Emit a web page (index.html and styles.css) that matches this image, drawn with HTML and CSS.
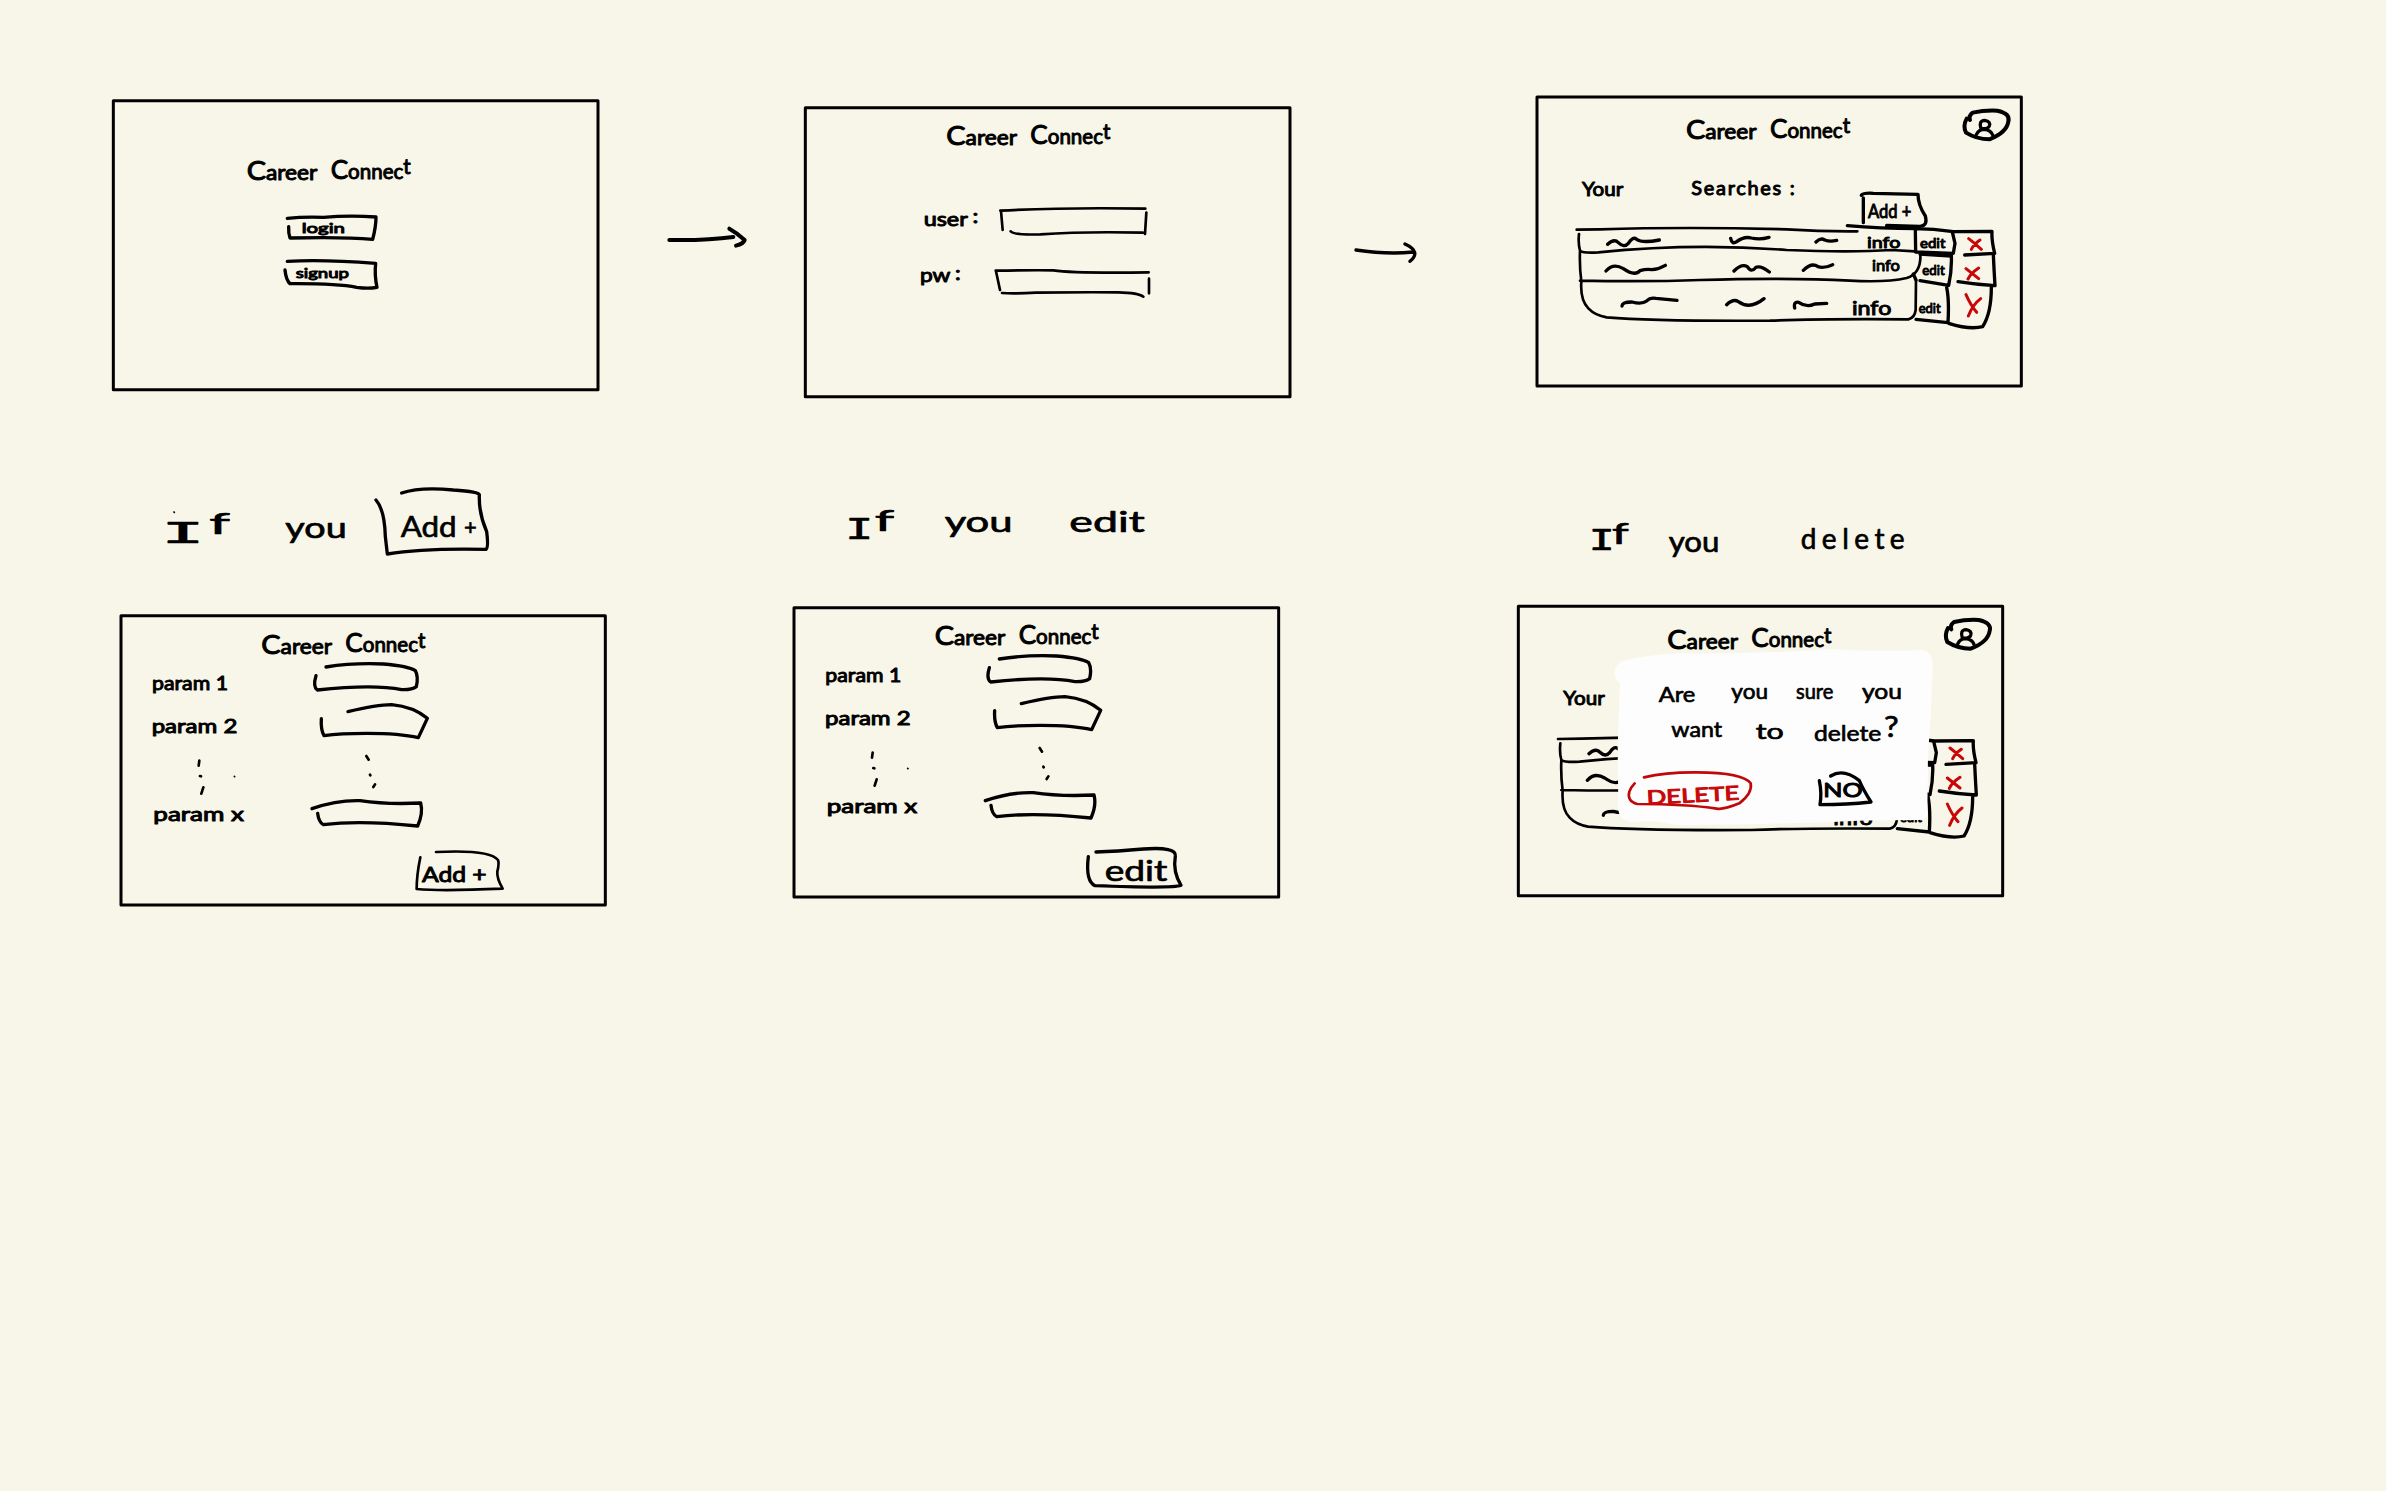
FILE: index.html
```html
<!DOCTYPE html>
<html lang="en">
<head>
<meta charset="utf-8">
<title>Career Connect wireframes</title>
<link rel="stylesheet" href="styles.css">
</head>
<body>
<svg class="defs" aria-hidden="true">
  <defs>
    <g id="avatar">
      <path class="heavy" d="M1350 120Q1345 108 1358 98Q1395 90 1432 92Q1472 100 1465 125Q1460 158 1408 178Q1370 178 1338 158Q1328 138 1340 116"/>
      <path class="bold" d="M1383 146Q1375 122 1394 121Q1413 124 1408 138Q1404 148 1383 146M1369 164Q1376 148 1394 148Q1412 150 1418 165"/>
    </g>
    <g id="table">
      <path d="M170 449L240 448Q500 440 800 448Q910 455 1012 454M177 462Q174 490 180 512Q190 520 235 517Q520 488 800 510Q990 518 1115 510L1185 514M180 512Q178 560 184 604Q180 660 205 685Q225 706 260 712Q400 724 750 722Q900 716 1165 718Q1184 714 1187 690L1188 600M180 602Q380 606 540 600Q800 592 990 602Q1100 608 1160 594Q1204 580 1201 522"/>
      <path class="bold" d="M1186 450L1187 516L1300 520L1305 490L1297 456M1183 446Q1240 446 1300 455L1416 454Q1414 480 1424 520L1334 525M1200 522L1294 528Q1296 570 1286 616L1200 602M1420 524Q1422 570 1425 617Q1370 614 1314 605M1280 622Q1288 660 1284 728L1188 718M1414 622Q1414 700 1388 740Q1350 750 1286 730M1180 582L1188 600M1188 516L1294 526"/>
      <path class="bold" d="M263 493Q282 475 295 488Q312 505 325 490Q338 468 350 478Q366 490 418 480M258 573Q280 548 310 566Q344 590 360 572Q380 566 395 569Q416 568 436 556M306 678Q306 666 336 666Q366 674 380 663Q390 652 408 655L471 661"/>
      <path class="bold" d="M632 475Q636 495 650 485Q672 468 694 474Q720 480 747 472M642 573Q665 550 682 560Q694 580 708 562Q722 556 748 576M620 674Q640 655 655 665Q690 690 732 656M888 486Q902 472 914 480Q930 486 950 481M850 571Q875 546 894 560Q912 566 938 554M824 684Q820 664 836 667Q860 684 884 672L920 670"/>
      <path class="red" d="M1346 476Q1362 488 1384 508M1380 480Q1362 492 1354 508M1338 566L1376 596M1376 564Q1352 580 1344 597M1338 644Q1352 676 1370 697M1382 656Q1358 674 1345 708"/>
    </g>
    <g id="fields">
      <path class="bold" d="M678 591Q760 578 850 582Q925 588 946 602Q956 620 949 650Q936 660 905 659Q820 642 652 660Q638 650 648 617"/>
      <path class="bold" d="M744 725Q830 704 875 704Q940 710 982 745L955 803Q900 790 800 790Q720 790 672 797Q662 780 664 746"/>
      <path class="bold" d="M636 1016Q710 990 780 992Q860 1004 962 999Q970 1030 953 1068Q780 1050 670 1064Q656 1056 653 1030"/>
      <path d="M298 872L296 887M300 918L303 919M310 952L304 971M799 858L806 869M810 914L811 916M825 943L820 951"/>
      <path class="speck" d="M403 919L404 920"/>
    </g>
  </defs>
</svg>

<main class="canvas">
  <svg class="panel home" viewBox="0 0 2040 990">
    <rect x="70" y="62" width="1454" height="867"/>
    <g transform="translate(-28 123)">
      <text class="title" x="498" y="178" textLength="212" lengthAdjust="spacingAndGlyphs"><tspan class="cap">C</tspan>areer</text>
      <text class="title" x="750" y="174" textLength="240" lengthAdjust="spacingAndGlyphs"><tspan class="cap">C</tspan>onnec<tspan dy="-14">t</tspan></text>
    </g>
    <path class="bold" d="M592 415Q640 410 700 412Q780 405 858 411Q858 440 848 478Q760 470 600 474Q595 460 596 440"/>
    <text class="tiny" x="635" y="459" textLength="130" lengthAdjust="spacingAndGlyphs">login</text>
    <path class="bold" d="M592 544Q700 538 857 550Q853 585 861 622Q835 627 800 622Q740 610 600 611Q588 600 585 570"/>
    <text class="tiny" x="617" y="594" textLength="160" lengthAdjust="spacingAndGlyphs">signup</text>
    <path class="heavy" d="M1738 480Q1850 482 1930 471M1918 446Q1940 458 1964 480Q1960 492 1938 497"/>
  </svg>

  <svg class="panel login" viewBox="0 0 2040 990">
    <rect x="76" y="53" width="1454" height="867"/>
    <g transform="translate(1 -13)">
      <text class="title" x="498" y="178" textLength="212" lengthAdjust="spacingAndGlyphs"><tspan class="cap">C</tspan>areer</text>
      <text class="title" x="750" y="174" textLength="240" lengthAdjust="spacingAndGlyphs"><tspan class="cap">C</tspan>onnec<tspan dy="-14">t</tspan></text>
    </g>
    <text class="label" x="431" y="409" textLength="164" lengthAdjust="spacingAndGlyphs">user<tspan dx="12" dy="-10">:</tspan></text>
    <path d="M661 362Q850 352 1096 356M663 363L668 420M692 424Q700 436 781 433Q911 424 1088 428M1099 368L1095 432"/>
    <text class="label" x="420" y="577" textLength="122" lengthAdjust="spacingAndGlyphs">pw<tspan dx="12" dy="-6">:</tspan></text>
    <path d="M647 542Q760 540 820 541Q880 550 1106 547M648 544L660 600M666 609Q700 612 768 608Q900 606 1015 607Q1075 608 1090 620M1107 566V610"/>
    <path class="bold" d="M1728 480Q1821 494 1900 486M1875 462Q1925 485 1890 514"/>
  </svg>

  <svg class="panel searches" viewBox="0 0 1560 960">
    <rect x="51" y="51" width="1453" height="867"/>
    <text class="title" x="498" y="178" textLength="212" lengthAdjust="spacingAndGlyphs"><tspan class="cap">C</tspan>areer</text>
    <text class="title" x="750" y="174" textLength="240" lengthAdjust="spacingAndGlyphs"><tspan class="cap">C</tspan>onnec<tspan dy="-14">t</tspan></text>
    <use href="#avatar"/>
    <text class="label" x="186" y="348" textLength="124" lengthAdjust="spacingAndGlyphs">Your</text>
    <text class="label" x="514" y="346" textLength="310">Searches :</text>
    <path class="bold" d="M1024 346Q1030 338 1060 340L1194 343Q1194 375 1216 408Q1224 438 1200 439L1100 436M1030 354V428M982 437Q1080 446 1190 446"/>
    <text class="label" x="1044" y="415" textLength="130" lengthAdjust="spacingAndGlyphs">Add +</text>
    <use href="#table"/>
    <text class="small" x="1041" y="504" textLength="100" lengthAdjust="spacingAndGlyphs">info</text>
    <text class="small" x="1056" y="573" textLength="84" lengthAdjust="spacingAndGlyphs">info</text>
    <text class="label" x="996" y="706" textLength="118" lengthAdjust="spacingAndGlyphs">info</text>
    <text class="tiny" x="1200" y="505" textLength="76" lengthAdjust="spacingAndGlyphs">edit</text>
    <text class="tiny" x="1207" y="585" textLength="67" lengthAdjust="spacingAndGlyphs">edit</text>
    <text class="tiny" x="1196" y="699" textLength="66" lengthAdjust="spacingAndGlyphs">edit</text>
  </svg>

  <svg class="panel add" viewBox="0 0 1560 1350">
    <path class="speck" d="M222 126L223 127"/>
    <text class="caption" y="218"><tspan class="serif" x="184" textLength="130" lengthAdjust="spacingAndGlyphs">I</tspan><tspan x="328" y="191" textLength="62" lengthAdjust="spacingAndGlyphs">f</tspan></text>
    <text class="caption" x="556" y="204" textLength="184" lengthAdjust="spacingAndGlyphs">you</text>
    <path class="bold" d="M905 69Q960 50 1060 60Q1140 65 1138 75Q1136 130 1160 185Q1166 232 1158 238Q970 234 862 252L856 200Q854 120 828 90"/>
    <text class="caption" x="902" y="202" textLength="168" lengthAdjust="spacingAndGlyphs">Add</text>
    <text class="caption plus" x="1092" y="194">+</text>
    <rect x="63" y="437" width="1453" height="868"/>
    <g transform="translate(-14 373)">
      <text class="title" x="498" y="178" textLength="212" lengthAdjust="spacingAndGlyphs"><tspan class="cap">C</tspan>areer</text>
      <text class="title" x="750" y="174" textLength="240" lengthAdjust="spacingAndGlyphs"><tspan class="cap">C</tspan>onnec<tspan dy="-14">t</tspan></text>
    </g>
    <text class="label" x="156" y="661" textLength="228" lengthAdjust="spacingAndGlyphs">param 1</text>
    <text class="label" x="155" y="790" textLength="257" lengthAdjust="spacingAndGlyphs">param 2</text>
    <text class="label" x="160" y="1052" textLength="272" lengthAdjust="spacingAndGlyphs">param x</text>
    <use href="#fields"/>
    <path d="M961 1162Q950 1215 950 1257Q1020 1264 1208 1256Q1190 1225 1192 1205Q1198 1180 1194 1170Q1170 1138 1008 1146"/>
    <text class="button" x="966" y="1235" textLength="194" lengthAdjust="spacingAndGlyphs">Add +</text>
  </svg>

  <svg class="panel edit" viewBox="0 0 1560 1290">
    <text class="caption" y="176"><tspan class="serif" x="196" textLength="84" lengthAdjust="spacingAndGlyphs">I</tspan><tspan x="284" y="153" textLength="58" lengthAdjust="spacingAndGlyphs">f</tspan></text>
    <text class="caption" x="494" y="157" textLength="204" lengthAdjust="spacingAndGlyphs">you</text>
    <text class="caption" x="868" y="156" textLength="226" lengthAdjust="spacingAndGlyphs">edit</text>
    <rect x="42" y="383" width="1454" height="868"/>
    <g transform="translate(-34 318)">
      <text class="title" x="498" y="178" textLength="212" lengthAdjust="spacingAndGlyphs"><tspan class="cap">C</tspan>areer</text>
      <text class="title" x="750" y="174" textLength="240" lengthAdjust="spacingAndGlyphs"><tspan class="cap">C</tspan>onnec<tspan dy="-14">t</tspan></text>
    </g>
    <text class="label" x="136" y="607" textLength="228" lengthAdjust="spacingAndGlyphs">param 1</text>
    <text class="label" x="135" y="736" textLength="257" lengthAdjust="spacingAndGlyphs">param 2</text>
    <text class="label" x="140" y="998" textLength="272" lengthAdjust="spacingAndGlyphs">param x</text>
    <use href="#fields" transform="translate(-20 -54)"/>
    <path class="bold" d="M948 1116Q1010 1114 1090 1107Q1190 1100 1186 1128Q1178 1175 1203 1216Q1180 1226 945 1217Q916 1204 925 1130"/>
    <text class="caption" x="974" y="1202" textLength="188" lengthAdjust="spacingAndGlyphs">edit</text>
  </svg>

  <svg class="panel delete" viewBox="0 0 1560 1230">
    <text class="caption" y="151"><tspan class="serif" x="266" textLength="78" lengthAdjust="spacingAndGlyphs">I</tspan><tspan x="336" y="132" textLength="50" lengthAdjust="spacingAndGlyphs">f</tspan></text>
    <text class="caption" x="506" y="155" textLength="152" lengthAdjust="spacingAndGlyphs">you</text>
    <text class="caption" x="902" y="147" textLength="312" lengthAdjust="spacing">delete</text>
    <rect x="55" y="319" width="1453" height="868"/>
    <g transform="translate(4 268)">
      <text class="title" x="498" y="178" textLength="212" lengthAdjust="spacingAndGlyphs"><tspan class="cap">C</tspan>areer</text>
      <text class="title" x="750" y="174" textLength="240" lengthAdjust="spacingAndGlyphs"><tspan class="cap">C</tspan>onnec<tspan dy="-14">t</tspan></text>
      <use href="#avatar"/>
      <text class="label" x="186" y="348" textLength="124" lengthAdjust="spacingAndGlyphs">Your</text>
      <use href="#table"/>
      <text class="label" x="996" y="706" textLength="118" lengthAdjust="spacingAndGlyphs">info</text>
      <text class="tiny" x="1196" y="699" textLength="66" lengthAdjust="spacingAndGlyphs">edit</text>
    </g>
    <path class="dialog" d="M343 520Q344 488 380 480Q440 466 520 460Q760 462 1000 448Q1150 456 1262 450Q1296 454 1298 490Q1294 650 1284 760L1282 945Q1276 962 1250 960Q1080 960 1000 966Q740 974 600 974Q520 978 480 966Q440 962 400 966Q360 964 355 930L353 740L360 548Q346 540 343 520Z"/>
    <text class="ask" x="476" y="606" textLength="110" lengthAdjust="spacingAndGlyphs">Are</text>
    <text class="ask" x="694" y="598" textLength="110" lengthAdjust="spacingAndGlyphs">you</text>
    <text class="ask" x="888" y="598" textLength="112" lengthAdjust="spacingAndGlyphs">sure</text>
    <text class="ask" x="1086" y="598" textLength="120" lengthAdjust="spacingAndGlyphs">you</text>
    <text class="ask" x="514" y="712" textLength="152" lengthAdjust="spacingAndGlyphs">want</text>
    <text class="ask" x="767" y="717" textLength="84" lengthAdjust="spacingAndGlyphs">to</text>
    <text class="ask" x="942" y="724" textLength="202" lengthAdjust="spacingAndGlyphs">delete</text>
    <text class="caption" x="1152" y="710" textLength="44" lengthAdjust="spacingAndGlyphs">?</text>
    <path class="oval" d="M432 832Q500 816 590 817Q730 818 752 850Q758 880 718 910Q670 930 650 926Q560 912 412 912Q380 904 388 875Q392 862 404 850"/>
    <text class="danger" x="440" y="906" textLength="278" lengthAdjust="spacingAndGlyphs" transform="rotate(-3 580 890)">DELETE</text>
    <path class="bold" d="M958 842Q966 880 960 914Q1040 914 1113 906Q1090 870 1078 842Q1030 804 992 828"/>
    <text class="no" x="970" y="892" textLength="118" lengthAdjust="spacingAndGlyphs">NO</text>
  </svg>
</main>
</body>
</html>
```
FILE: styles.css
```css
body {
  margin: 0;
  background: #f8f6e9;
}

.defs {
  position: absolute;
  width: 0;
  height: 0;
}

.canvas {
  position: relative;
  width: 2386px;
  height: 1491px;
  overflow: hidden;
}

.panel {
  position: absolute;
  overflow: visible;
}

.home { left: 90px; top: 80px; width: 680px; height: 330px; }
.login { left: 780px; top: 90px; width: 680px; height: 330px; }
.searches { left: 1520px; top: 80px; width: 520px; height: 320px; }
.add { left: 100px; top: 470px; width: 520px; height: 450px; }
.edit { left: 780px; top: 480px; width: 520px; height: 430px; }
.delete { left: 1500px; top: 500px; width: 520px; height: 410px; }

rect,
path {
  fill: none;
  stroke: #000;
  stroke-width: 8;
  stroke-linecap: round;
  stroke-linejoin: round;
}

rect { stroke-width: 9; }
path.bold { stroke-width: 10; }
path.heavy { stroke-width: 12; }
path.speck { stroke-width: 5; }
path.red { stroke: #c80808; stroke-width: 9; }
path.oval { stroke: #c00808; stroke-width: 8; }
path.dialog { fill: #fdfdfd; stroke: none; }

text {
  font-family: Lato, "Open Sans", sans-serif;
  font-size: 64px;
  fill: #000;
  stroke: #000;
  stroke-width: 3;
  stroke-linejoin: round;
}

.title { font-size: 63px; }
.cap { font-size: 80px; }
.label { font-size: 60px; }
.button { font-size: 66px; }
.small { font-size: 48px; }
.tiny { font-size: 42px; }
.caption { font-size: 84px; stroke-width: 2; }
.serif { font-family: "DejaVu Sans Mono", monospace; }
.plus { font-size: 66px; }
.ask { font-size: 64px; stroke-width: 2; }
.no { font-size: 58px; }
.danger { font-size: 58px; fill: #c80808; stroke: #c80808; }
```
